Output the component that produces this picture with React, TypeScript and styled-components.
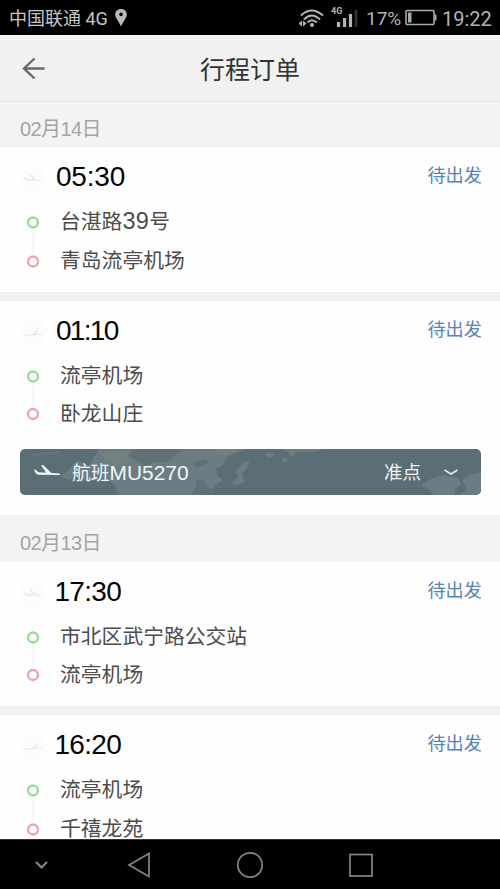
import React from "react";
import styled, { createGlobalStyle } from "styled-components";

const Global = createGlobalStyle`
  * { box-sizing: border-box; }
  body { margin: 0; background: #000; overflow: hidden; }
`;

const Screen = styled.div`
  width: 500px;
  height: 889px;
  display: flex;
  flex-direction: column;
  overflow: hidden;
  background: #f1f1f2;
  font-family: "Liberation Sans", "Noto Sans CJK SC", sans-serif;
  white-space: nowrap;
`;

const StatusBar = styled.div`
  height: 35px;
  flex: none;
  display: flex;
  align-items: center;
  background: #000;
  color: #c6c6c6;
  font-family: Roboto, "Noto Sans CJK SC", sans-serif;
  padding: 1px 9px 0 9px;
`;

const Carrier = styled.span`
  font-size: 18px;
  line-height: 24px;
  width: 105px;
  padding-top: 1px;
`;

const StatusRight = styled.div`
  margin-left: auto;
  display: flex;
  align-items: center;
`;

const StatusText = styled.span<{ $w: number; $size: number }>`
  width: ${(p) => p.$w}px;
  font-size: ${(p) => p.$size}px;
  line-height: 24px;
  padding-top: 1px;
  color: #b4b4b4;
`;

const Header = styled.header`
  height: 67px;
  flex: none;
  display: grid;
  grid-template-columns: 60px 1fr 60px;
  align-items: center;
  background: #f1f1f1;
  border-top: 1px solid #fafafa;
  border-bottom: 1px solid #e6e6e6;
  padding-left: 22px;
  padding-right: 22px;
`;

const Title = styled.h1`
  margin: 0;
  padding-top: 2px;
  text-align: center;
  font-size: 25px;
  line-height: 36px;
  font-weight: 400;
  color: #333;
`;

const List = styled.main`
  flex: 1;
  min-height: 0;
  overflow: hidden;
`;

const DateRow = styled.div<{ $h: number; $pad: number }>`
  height: ${(p) => p.$h}px;
  padding: ${(p) => p.$pad}px 20px 0;
  font-size: 20px;
  line-height: 26px;
  letter-spacing: -0.6px;
  color: #a4a4a4;
  background: #f3f3f4;
`;

const Card = styled.section<{ $h: number; $gap: number }>`
  height: ${(p) => p.$h}px;
  margin-bottom: ${(p) => p.$gap}px;
  padding: 14px 18px 0 20px;
  background: #fefefe;
  box-shadow: 0 0 1px #dcdcdc;
`;

const CardHead = styled.div`
  display: flex;
  height: 40px;
`;

const PlaneBadge = styled.div`
  width: 26px;
  height: 30px;
  margin-top: 2px;
  display: flex;
  align-items: center;
  justify-content: center;
  border-radius: 50%;
  background: #fcfcfc;
`;

const Time = styled.div<{ $tracking: number; $indent: number }>`
  margin-left: ${(p) => p.$indent}px;
  font-size: 28px;
  line-height: 32px;
  letter-spacing: ${(p) => p.$tracking}px;
  color: #060606;
`;

const State = styled.div`
  margin-left: auto;
  font-size: 18.2px;
  line-height: 31px;
  color: #5a83b5;
`;

const Route = styled.div`
  display: grid;
  grid-template-columns: 26px 1fr;
  column-gap: 14px;
  height: 77px;
`;

const Place = styled.div`
  font-size: 20.8px;
  line-height: 41px;
  color: #4c4c4c;
`;

const Digits = styled.span`
  font-size: 23.5px;
  letter-spacing: 0.4px;
  line-height: 1;
`;

const Places = styled.div<{ $step: number }>`
  display: grid;
  grid-auto-rows: ${(p) => p.$step}px;
`;

const Flight = styled.div`
  position: relative;
  width: 461px;
  height: 46px;
  margin-top: 17px;
  border-radius: 5px;
  overflow: hidden;
  background: #5c6e75;
`;

const MapArt = styled.svg`
  position: absolute;
  inset: 0;
`;

const FlightRow = styled.div`
  position: relative;
  height: 44px;
  display: flex;
  align-items: center;
  padding: 0 22px 0 13px;
  color: #f1f6f6;
`;

const FlightName = styled.span`
  margin-left: 11px;
  font-size: 18.8px;
`;

const FlightCode = styled.span`
  font-size: 20.9px;
`;

const Punctual = styled.span`
  margin-left: auto;
  margin-right: 22px;
  font-size: 18.5px;
`;

const NavBar = styled.nav`
  height: 50px;
  flex: none;
  background: #000;
  border-top: 1px solid #333;
`;

const Plane = ({ color, width, up }: { color: string; width: number; up?: boolean }) => (
  <svg width={width} height={width / 2} viewBox="0 0 28 14">
    {up ? (
      <path d="M1 11.4L6 9.8L12 10L20 2.4L22 2.4L17.4 9.4L26.5 9.2V11L5 12.4Z" fill={color} />
    ) : (
      <path d="M1 5.6L2.6 5.8L5.4 8.2L13.2 8.7L8 1L10.2 1.2L18.5 9L26.6 9.6Q28 10.3 26.4 11L5 10.7Q2.5 10.2 1 5.6Z" fill={color} />
    )}
  </svg>
);

const enlargeDigits = (text: string) =>
  text.split(/(\d+)/).map((part, i) => (/^\d/.test(part) ? <Digits key={i}>{part}</Digits> : part));

type Trip = {
  time: string;
  tracking: number;
  indent: number;
  from: string;
  to: string;
  h: number;
  gap: number;
  step: number;
  up?: boolean;
  flight?: boolean;
};

const TripCard = ({ trip }: { trip: Trip }) => (
  <Card $h={trip.h} $gap={trip.gap}>
    <CardHead>
      <PlaneBadge><Plane color="#ebebeb" width={20} up={trip.up} /></PlaneBadge>
      <Time $tracking={trip.tracking} $indent={trip.indent}>{trip.time}</Time>
      <State>待出发</State>
    </CardHead>
    <Route>
      <svg width="26" height="77">
        <path d={`M13 30V${trip.step + 13}`} stroke="#f1f1f1" strokeWidth="1.2" />
        <circle cx="13" cy="21.5" r="5" fill="none" stroke="#92dc98" strokeWidth="2.3" />
        <circle cx="13" cy={trip.step + 21.5} r="5" fill="none" stroke="#eca4ac" strokeWidth="2.3" />
      </svg>
      <Places $step={trip.step}>
        <Place>{enlargeDigits(trip.from)}</Place>
        <Place>{trip.to}</Place>
      </Places>
    </Route>
    {trip.flight && (
      <Flight>
        <MapArt width="461" height="46" viewBox="0 0 461 46">
          <path d="M40 27L48 22L57 11L69 17L79 0H228L216 4L207 8L202 17L196 20L198 27L203 31L194 38L191 46H99L94 35L83 29L68 33L59 27L49 31Z" fill="#6b7d83" />
          <path d="M113 0H165L154 7L145 14L135 13L126 17L117 12L108 7ZM172 15L186 10L188 14L176 19ZM177 30L184 31L187 38L196 42L193 46H171L175 39Z" fill="#5f7177" />
          <path d="M81 5L94 2L106 4L110 12L98 17L86 13ZM193 0H220L209 5L197 5Z" fill="#71827f" />
          <g fill="#6b7d83">
            <path d="M224 13L230 11L226 21L221 25L225 32L218 36L211 34L218 28L216 22ZM245 5L252 3L255 7L248 9ZM262 0H304L293 3L276 3L273 8L269 4ZM261 10L266 8L268 12L263 13Z" />
            <path d="M401 37L412 29L424 26L438 29L441 35L436 39L434 46H414L409 40Z" />
            <path d="M443 31L449 26L461 23V46H440L446 40Z" />
            <path d="M7 5L40 2L38 6L25 5L18 7Z" opacity="0.6" />
          </g>
        </MapArt>
        <FlightRow>
          <Plane color="#f1f6f6" width={28} />
          <FlightName>航班<FlightCode>MU5270</FlightCode></FlightName>
          <Punctual>准点</Punctual>
          <svg width="16" height="10" viewBox="0 0 16 10"><path d="M1.5 4L8 8L14.5 4" fill="none" stroke="#e2e9ea" strokeWidth="1.6" /></svg>
        </FlightRow>
      </Flight>
    )}
  </Card>
);

const first: Trip[] = [
  { time: "05:30", tracking: -0.2, indent: 10, from: "台湛路39号", to: "青岛流亭机场", h: 145, gap: 9, step: 39 },
  { time: "01:10", tracking: -1.7, indent: 10, from: "流亭机场", to: "卧龙山庄", h: 214, gap: 0, step: 37.5, up: true, flight: true },
];
const second: Trip[] = [
  { time: "17:30", tracking: -0.7, indent: 8.5, from: "市北区武宁路公交站", to: "流亭机场", h: 144, gap: 9, step: 37.5 },
  { time: "16:20", tracking: -0.7, indent: 8.5, from: "流亭机场", to: "千禧龙苑", h: 145, gap: 0, step: 39, up: true },
];

export default function App() {
  return (
    <Screen>
      <Global />
      <StatusBar>
        <Carrier>中国联通 4G</Carrier>
        <svg width="14" height="20" viewBox="0 0 14 20"><path fillRule="evenodd" d="M7 1C3.5 1 1.2 3.4 1.2 6.6C1.2 10 4.7 13.2 7 18.5C9.3 13.2 12.8 10 12.8 6.6C12.8 3.4 10.5 1 7 1ZM7 4.6A1.8 1.8 0 1 1 7 8.2A1.8 1.8 0 1 1 7 4.6Z" fill="#b9b9b9" /></svg>
        <StatusRight>
          <svg width="67" height="32" viewBox="0 0 67 32">
            <g fill="none" stroke="#b5b5b5" strokeWidth="2.1">
              <path d="M2 13.5Q12.5 3.5 24 13.5M5 17.5Q12.5 9.5 21 17.5M8.5 20.5Q12.5 16 18 20.5" />
            </g>
            <circle cx="13" cy="23" r="2" fill="#b5b5b5" />
            <path d="M-0.5 21.5L3 18.5V24.5ZM7.5 21.5L4 18.5V24.5Z" fill="#b5b5b5" />
            <text x="32" y="12" fontSize="9" fontWeight="700" fill="#b5b5b5" fontFamily="Roboto">4G</text>
            <path d="M39.5 20V25M45.5 16V25M51.5 12V25" stroke="#b5b5b5" strokeWidth="3.2" />
            <path d="M57 8V25" stroke="#333" strokeWidth="2.6" />
          </svg>
          <StatusText $w={39} $size={19}>17%</StatusText>
          <svg width="32" height="18" viewBox="0 0 32 18">
            <rect x="1" y="1.5" width="28" height="14" rx="1" fill="none" stroke="#aaa" strokeWidth="1.6" />
            <path d="M30.5 5.5V11.5" stroke="#aaa" strokeWidth="2" />
            <rect x="3" y="3.5" width="3.5" height="10" fill="#aaa" />
          </svg>
          <StatusText $w={54} $size={20}>&nbsp;19:22</StatusText>
        </StatusRight>
      </StatusBar>
      <Header>
        <svg width="24" height="24" viewBox="0 0 24 24"><path d="M12.5 1.5L2 11.5L12.5 21.5M2 11.5H22.5" fill="none" stroke="#686868" strokeWidth="2.4" /></svg>
        <Title>行程订单</Title>
      </Header>
      <List>
        <DateRow $h={45} $pad={14}>02月14日</DateRow>
        {first.map((t) => <TripCard key={t.time} trip={t} />)}
        <DateRow $h={47} $pad={15}>02月13日</DateRow>
        {second.map((t) => <TripCard key={t.time} trip={t} />)}
      </List>
      <NavBar>
        <svg width="500" height="49" viewBox="0 839 500 49" fill="none" stroke="#858585" strokeWidth="1.7">
          <path d="M36 861L41.5 866.5L47 861" strokeWidth="2.2" />
          <path d="M149 852.5V875.5L129 864Z" />
          <circle cx="250" cy="864" r="12.2" />
          <rect x="350" y="853.5" width="22" height="21.5" />
        </svg>
      </NavBar>
    </Screen>
  );
}
